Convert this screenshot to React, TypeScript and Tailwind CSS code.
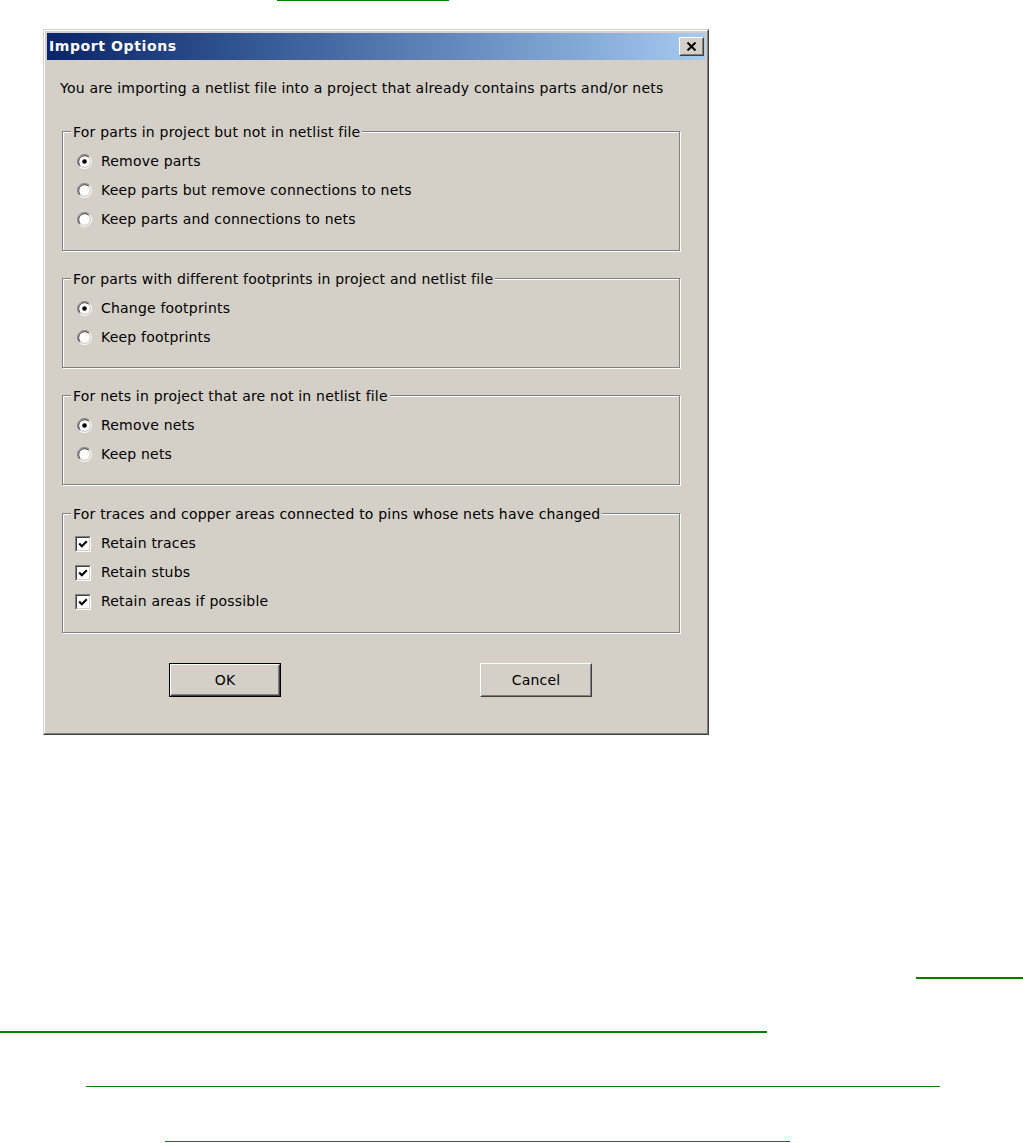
import React from 'react';

const font = { fontFamily: '"DejaVu Sans", Verdana, sans-serif' };

function Radio({ checked }: { checked?: boolean }) {
  return (
    <svg width="15" height="15" viewBox="0 0 15 15" className="shrink-0">
      <circle cx="7.5" cy="7.5" r="5.5" fill="#fff" />
      <path d="M2.55 12.45 A7 7 0 0 1 12.45 2.55" stroke="#808080" strokeWidth="1" fill="none" />
      <path d="M12.45 2.55 A7 7 0 0 1 2.55 12.45" stroke="#ffffff" strokeWidth="1" fill="none" />
      <path d="M3.26 11.74 A6 6 0 0 1 11.74 3.26" stroke="#404040" strokeWidth="1" fill="none" />
      <path d="M11.74 3.26 A6 6 0 0 1 3.26 11.74" stroke="#d4d0c8" strokeWidth="1" fill="none" />
      {checked && <circle cx="7.5" cy="7.5" r="2.3" fill="#000" />}
    </svg>
  );
}

function Checkbox() {
  return (
    <div className="w-[16px] h-[16px] shrink-0 border border-t-[#808080] border-l-[#808080] border-r-white border-b-white">
      <div className="w-full h-full border border-t-[#404040] border-l-[#404040] border-r-[#d4d0c8] border-b-[#d4d0c8] bg-white flex items-center justify-center">
        <svg width="10" height="10" viewBox="0 0 10 10">
          <path d="M1.2 4.6 L3.8 7.2 L8.8 2.2" stroke="#000" strokeWidth="2.1" fill="none" />
        </svg>
      </div>
    </div>
  );
}

function Group({ label, children, rows }: { label: string; children: React.ReactNode; rows: number }) {
  return (
    <div
      className={`relative ml-[15px] w-[618px] border border-[#808080] shadow-[1px_1px_0_#ffffff,inset_1px_1px_0_#ffffff] pt-[15px] ${rows === 3 ? 'pb-[16px]' : 'pb-[15px]'}`}
    >
      <div className="absolute left-[8px] top-[-8px] px-[2px] bg-[#d4d0c8] leading-[17px] whitespace-nowrap">
        {label}
      </div>
      {children}
    </div>
  );
}

function RadioRow({ text, checked }: { text: string; checked?: boolean }) {
  return (
    <div className="flex items-center h-[29px] pl-[14px] gap-[9px]">
      <Radio checked={checked} />
      <span>{text}</span>
    </div>
  );
}

function CheckRow({ text }: { text: string }) {
  return (
    <div className="flex items-center h-[29px] pl-[12px] gap-[10px]">
      <Checkbox />
      <span>{text}</span>
    </div>
  );
}

function Button({ text, isDefault }: { text: string; isDefault?: boolean }) {
  const inner = (
    <div className="w-full h-full border border-t-white border-l-white border-r-[#404040] border-b-[#404040]">
      <div className="w-full h-full border border-t-[#d4d0c8] border-l-[#d4d0c8] border-r-[#808080] border-b-[#808080] flex items-center justify-center">
        {text}
      </div>
    </div>
  );
  return isDefault ? (
    <div className="w-[112px] h-[34px] border border-black">{inner}</div>
  ) : (
    <div className="w-[112px] h-[34px]">{inner}</div>
  );
}

export default function App() {
  return (
    <div className="w-[1023px] h-[1143px] bg-white overflow-hidden text-[14px] tracking-[0.2px] text-black" style={font}>
      <div className="ml-[277px] w-[172px] h-[1px] bg-[#008000]" />

      {/* Dialog */}
      <div className="mt-[28px] ml-[43px] w-[666px] border border-t-[#d4d0c8] border-l-[#d4d0c8] border-r-[#404040] border-b-[#404040]">
        <div className="border border-t-white border-l-white border-r-[#808080] border-b-[#808080] bg-[#d4d0c8] p-[2px]">
          <div className="h-[27px] flex items-center justify-between bg-gradient-to-r from-[#0a246a] to-[#a6caf0] pl-[2px] pr-[1px]">
            <span className="text-white font-bold text-[14px] tracking-[0.6px]">Import Options</span>
            <div className="w-[25px] h-[19px] border border-t-white border-l-white border-r-[#404040] border-b-[#404040]">
              <div className="w-full h-full bg-[#d4d0c8] border border-t-[#d4d0c8] border-l-[#d4d0c8] border-r-[#808080] border-b-[#808080] flex items-center justify-center">
                <svg width="11" height="9" viewBox="0 0 11 9">
                  <path d="M1.5 0.5 L9.5 8.5 M9.5 0.5 L1.5 8.5" stroke="#000" strokeWidth="2" fill="none" />
                </svg>
              </div>
            </div>
          </div>

          <div className="pt-[20px] pb-[34px]">
            <div className="pl-[13px] leading-[17px] whitespace-nowrap">
              You are importing a netlist file into a project that already contains parts and/or nets
            </div>

            <div className="mt-[34px]">
              <Group label="For parts in project but not in netlist file" rows={3}>
                <RadioRow text="Remove parts" checked />
                <RadioRow text="Keep parts but remove connections to nets" />
                <RadioRow text="Keep parts and connections to nets" />
              </Group>
            </div>

            <div className="mt-[27px]">
              <Group label="For parts with different footprints in project and netlist file" rows={2}>
                <RadioRow text="Change footprints" checked />
                <RadioRow text="Keep footprints" />
              </Group>
            </div>

            <div className="mt-[27px]">
              <Group label="For nets in project that are not in netlist file" rows={2}>
                <RadioRow text="Remove nets" checked />
                <RadioRow text="Keep nets" />
              </Group>
            </div>

            <div className="mt-[28px]">
              <Group label="For traces and copper areas connected to pins whose nets have changed" rows={3}>
                <CheckRow text="Retain traces" />
                <CheckRow text="Retain stubs" />
                <CheckRow text="Retain areas if possible" />
              </Group>
            </div>

            <div className="mt-[30px] pl-[122px] flex gap-[199px]">
              <Button text="OK" isDefault />
              <Button text="Cancel" />
            </div>
          </div>
        </div>
      </div>

      {/* link underlines from surrounding help text */}
      <div className="mt-[242px] ml-[916px] w-[107px] h-[2px] bg-[#008000]" />
      <div className="mt-[52px] w-[767px] h-[2px] bg-[#008000]" />
      <div className="mt-[53px] ml-[86px] w-[854px] h-[1px] bg-[#008000]" />
      <div className="mt-[54px] ml-[165px] w-[625px] h-[1px] bg-[#008000]" />
    </div>
  );
}
